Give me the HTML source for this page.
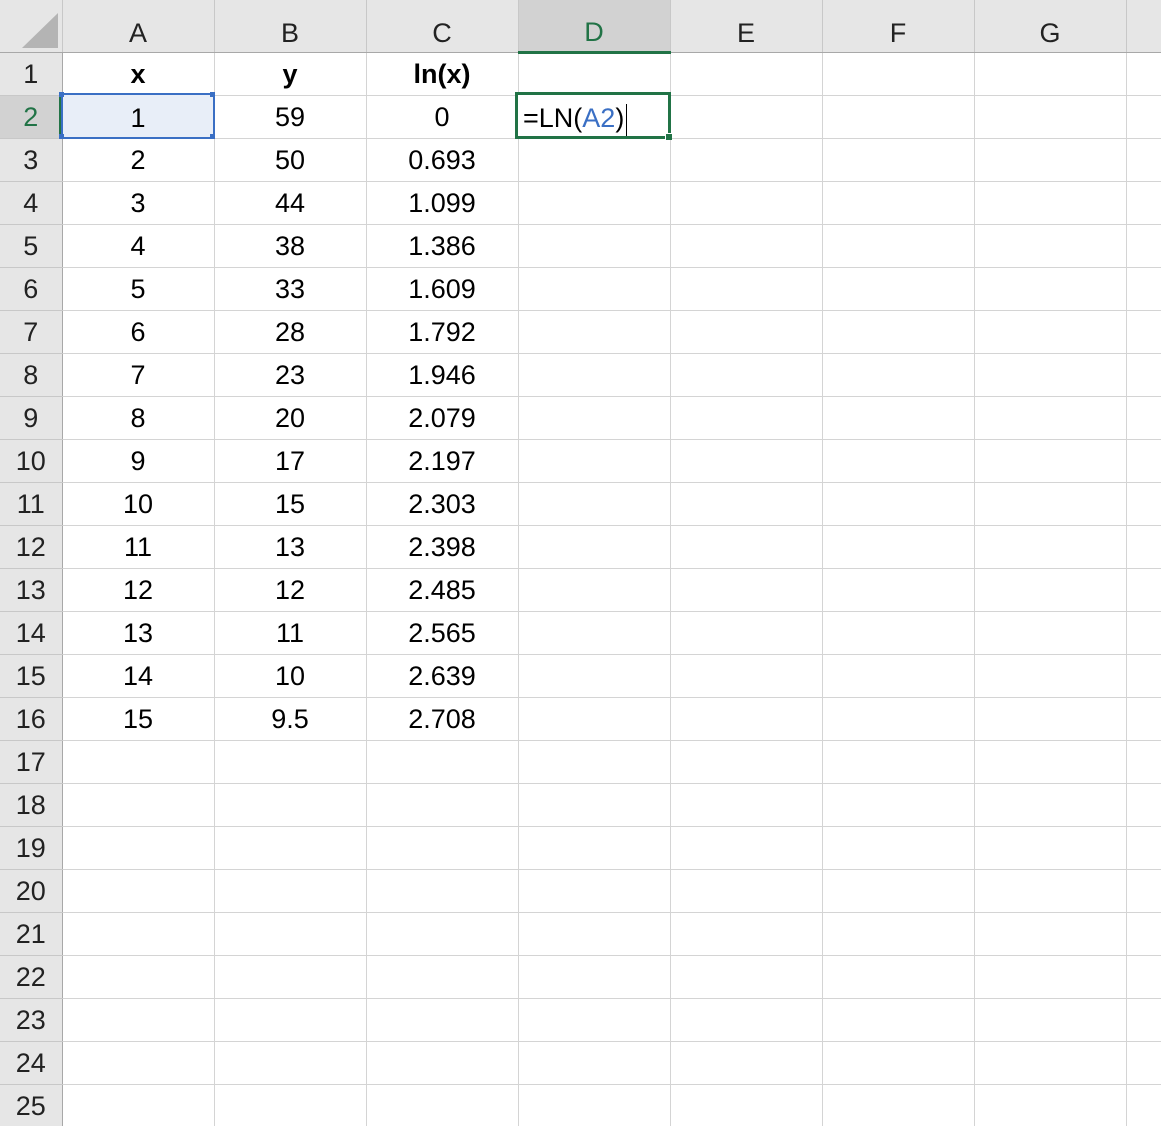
<!DOCTYPE html>
<html><head><meta charset="utf-8"><style>
html,body{margin:0;padding:0;background:#fff;width:1161px;height:1126px;overflow:hidden}
body{font-family:"Liberation Sans",sans-serif;position:relative}
table{border-collapse:collapse;table-layout:fixed;position:absolute;left:0;top:0;width:1226px}
td{height:42px;border:1px solid #d4d4d4;border-top:none;border-left:none;text-align:center;font-size:27px;padding:2px 0 0 0;box-sizing:border-box;height:43px;color:#000;white-space:nowrap;overflow:hidden}
td.h{background:#e6e6e6;border-right:1px solid #a8a8a8;border-bottom:1px solid #c8c8c8;color:#222;font-size:27px}
tr.top td{height:52px;background:#e6e6e6;border-bottom:1px solid #a8a8a8;border-right:1px solid #c8c8c8;color:#222;vertical-align:bottom;padding:0 0 3px 0;box-sizing:border-box}
b{font-weight:bold}
</style></head><body>
<table>
<colgroup><col style="width:62px"><col style="width:152px"><col style="width:152px"><col style="width:152px"><col style="width:152px"><col style="width:152px"><col style="width:152px"><col style="width:152px"><col style="width:100px"></colgroup>
<tr class="top"><td></td><td>A</td><td>B</td><td>C</td><td style="background:#d2d2d2;color:#217346;border-bottom:3px solid #217346">D</td><td>E</td><td>F</td><td>G</td><td></td></tr>
<tr><td class="h">1</td><td><b>x</b></td><td><b>y</b></td><td><b>ln(x)</b></td><td></td><td></td><td></td><td></td><td></td></tr>
<tr><td class="h" style="background:#d2d2d2;color:#217346">2</td><td>1</td><td>59</td><td>0</td><td></td><td></td><td></td><td></td><td></td></tr>
<tr><td class="h">3</td><td>2</td><td>50</td><td>0.693</td><td></td><td></td><td></td><td></td><td></td></tr>
<tr><td class="h">4</td><td>3</td><td>44</td><td>1.099</td><td></td><td></td><td></td><td></td><td></td></tr>
<tr><td class="h">5</td><td>4</td><td>38</td><td>1.386</td><td></td><td></td><td></td><td></td><td></td></tr>
<tr><td class="h">6</td><td>5</td><td>33</td><td>1.609</td><td></td><td></td><td></td><td></td><td></td></tr>
<tr><td class="h">7</td><td>6</td><td>28</td><td>1.792</td><td></td><td></td><td></td><td></td><td></td></tr>
<tr><td class="h">8</td><td>7</td><td>23</td><td>1.946</td><td></td><td></td><td></td><td></td><td></td></tr>
<tr><td class="h">9</td><td>8</td><td>20</td><td>2.079</td><td></td><td></td><td></td><td></td><td></td></tr>
<tr><td class="h">10</td><td>9</td><td>17</td><td>2.197</td><td></td><td></td><td></td><td></td><td></td></tr>
<tr><td class="h">11</td><td>10</td><td>15</td><td>2.303</td><td></td><td></td><td></td><td></td><td></td></tr>
<tr><td class="h">12</td><td>11</td><td>13</td><td>2.398</td><td></td><td></td><td></td><td></td><td></td></tr>
<tr><td class="h">13</td><td>12</td><td>12</td><td>2.485</td><td></td><td></td><td></td><td></td><td></td></tr>
<tr><td class="h">14</td><td>13</td><td>11</td><td>2.565</td><td></td><td></td><td></td><td></td><td></td></tr>
<tr><td class="h">15</td><td>14</td><td>10</td><td>2.639</td><td></td><td></td><td></td><td></td><td></td></tr>
<tr><td class="h">16</td><td>15</td><td>9.5</td><td>2.708</td><td></td><td></td><td></td><td></td><td></td></tr>
<tr><td class="h">17</td><td></td><td></td><td></td><td></td><td></td><td></td><td></td><td></td></tr>
<tr><td class="h">18</td><td></td><td></td><td></td><td></td><td></td><td></td><td></td><td></td></tr>
<tr><td class="h">19</td><td></td><td></td><td></td><td></td><td></td><td></td><td></td><td></td></tr>
<tr><td class="h">20</td><td></td><td></td><td></td><td></td><td></td><td></td><td></td><td></td></tr>
<tr><td class="h">21</td><td></td><td></td><td></td><td></td><td></td><td></td><td></td><td></td></tr>
<tr><td class="h">22</td><td></td><td></td><td></td><td></td><td></td><td></td><td></td><td></td></tr>
<tr><td class="h">23</td><td></td><td></td><td></td><td></td><td></td><td></td><td></td><td></td></tr>
<tr><td class="h">24</td><td></td><td></td><td></td><td></td><td></td><td></td><td></td><td></td></tr>
<tr><td class="h">25</td><td></td><td></td><td></td><td></td><td></td><td></td><td></td><td></td></tr>
</table>
<div style="position:absolute;left:22px;top:13px;width:0;height:0;border-left:36px solid transparent;border-bottom:35px solid #b4b4b4"></div>
<div style="position:absolute;left:59px;top:95px;width:3px;height:43px;background:#217346"></div>
<div style="position:absolute;left:61px;top:93px;width:150px;height:42px;border:2px solid #3a6fc4;background:#e8eef8;text-align:center;font-size:27px;line-height:46px">1</div>
<div style="position:absolute;left:59px;top:92px;width:5px;height:5px;background:#3a6fc4"></div>
<div style="position:absolute;left:210px;top:92px;width:5px;height:5px;background:#3a6fc4"></div>
<div style="position:absolute;left:59px;top:134px;width:5px;height:5px;background:#3a6fc4"></div>
<div style="position:absolute;left:210px;top:134px;width:5px;height:5px;background:#3a6fc4"></div>
<div style="position:absolute;left:515px;top:92px;width:150px;height:41px;border:3px solid #217346;background:#fff;font-size:27px;line-height:46px"><span style="margin-left:5px">=LN(<span style="color:#3a6fc4">A2</span>)</span><span style="display:inline-block;width:1px;height:32px;background:#000;vertical-align:middle;margin-left:2px"></span></div>
<div style="position:absolute;left:665px;top:133px;width:6px;height:6px;background:#217346;border-left:1px solid #fff;border-top:1px solid #fff"></div>
</body></html>
